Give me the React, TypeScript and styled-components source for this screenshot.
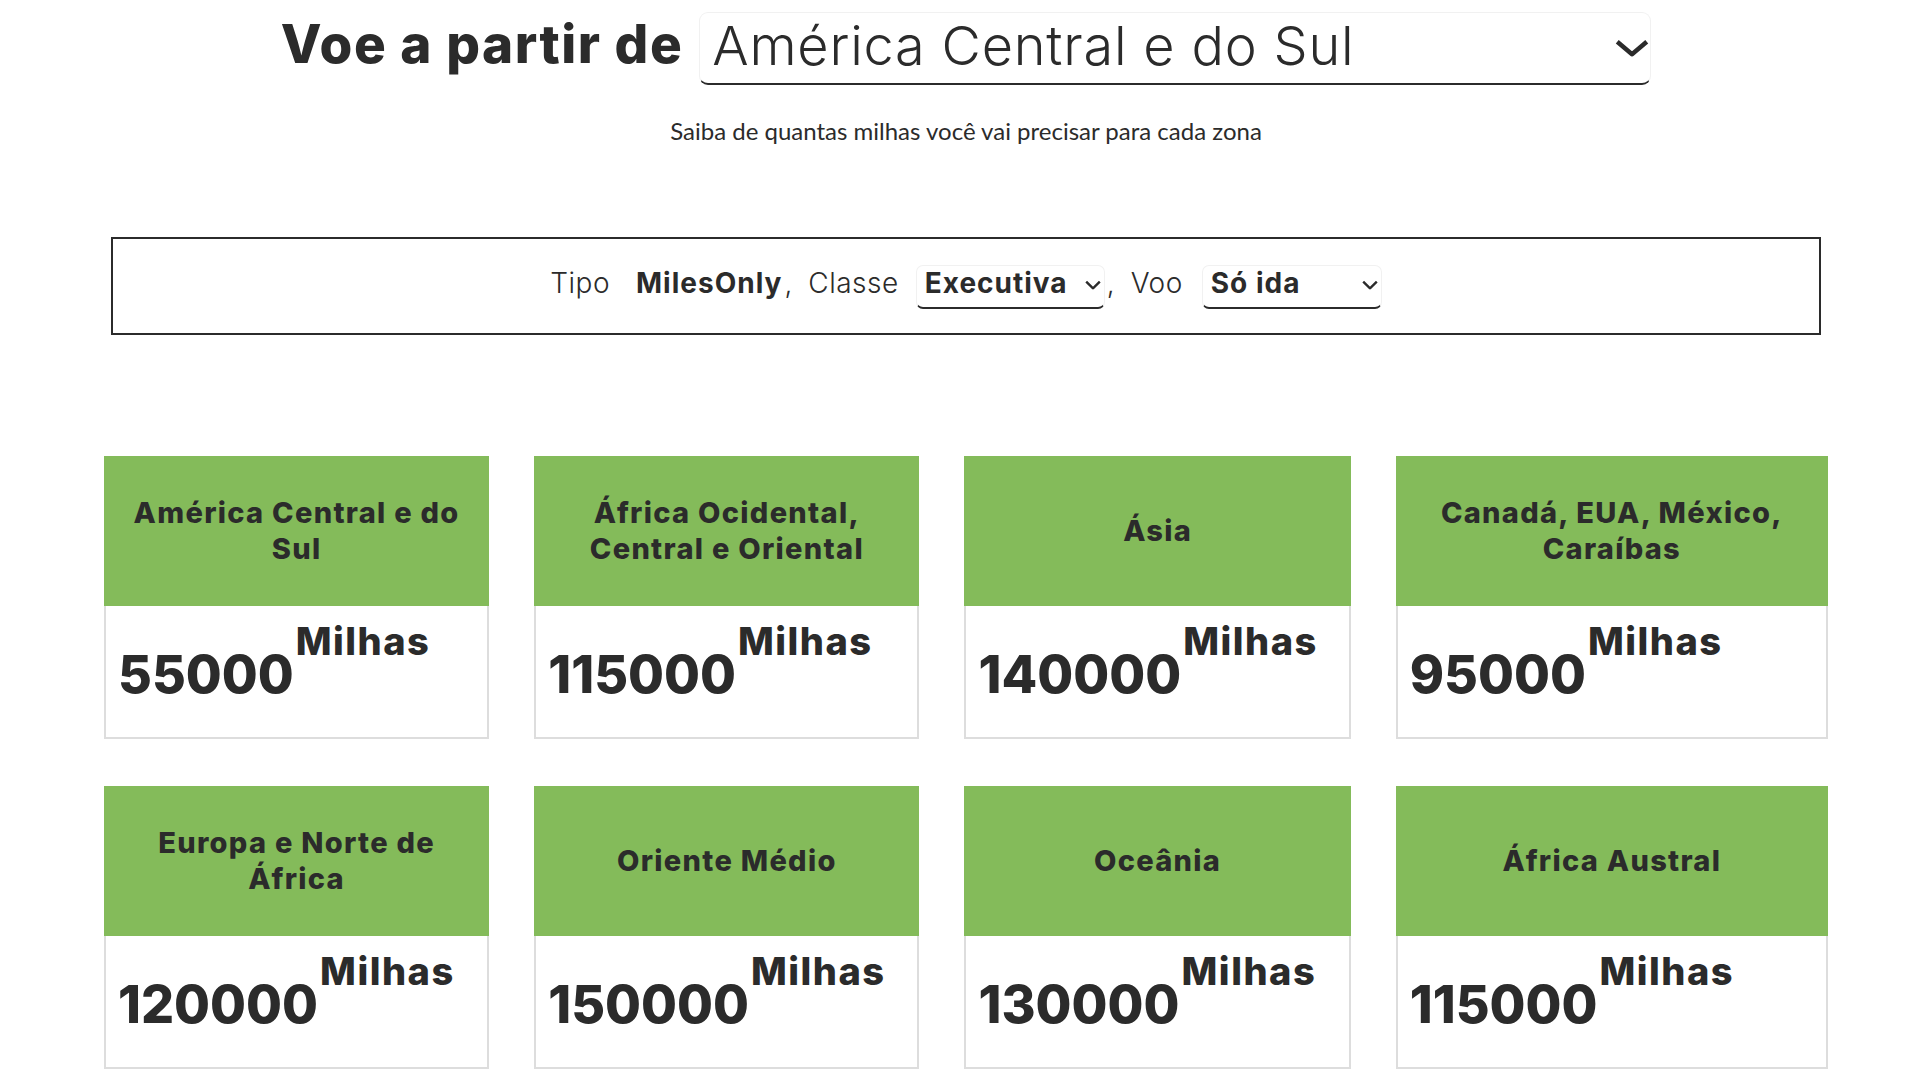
import React, { useState } from "react";
import styled, { createGlobalStyle } from "styled-components";

const GlobalStyle = createGlobalStyle`
  html, body { margin: 0; padding: 0; background: #ffffff; }
  body {
    font-family: Inter, "Open Sans", "DejaVu Sans", sans-serif;
    color: #2b2b2b;
  }
  * { box-sizing: border-box; }
`;

const Page = styled.main`
  padding: 12px 84px 0 104px;
`;

const HeroRow = styled.div`
  display: flex;
  justify-content: center;
  align-items: flex-start;
  gap: 16px;
`;

const HeroTitle = styled.h1`
  margin: 6px 0 0;
  font-size: 53px;
  line-height: 1;
  font-weight: 800;
  letter-spacing: 1.5px;
  color: #2b2b2b;
  white-space: nowrap;
`;

const SelectWrap = styled.div<{ $width: number; $height: number }>`
  position: relative;
  width: ${(p) => p.$width}px;
  height: ${(p) => p.$height}px;
  flex: none;
`;

const HeroSelect = styled.select`
  appearance: none;
  -webkit-appearance: none;
  width: 100%;
  height: 100%;
  margin: 0;
  padding: 0 50px 6px 12px;
  background: #fff;
  border: 1px solid #f1f1f1;
  border-bottom: 2px solid #2b2b2b;
  border-radius: 9px;
  font-family: Inter, "Open Sans", sans-serif;
  font-weight: 300;
  font-size: 54px;
  letter-spacing: 0.8px;
  color: #2b2b2b;
  outline: none;
`;

const FilterSelect = styled.select`
  appearance: none;
  -webkit-appearance: none;
  width: 100%;
  height: 100%;
  margin: 0;
  padding: 0 26px 8px 8px;
  background: #fff;
  border: 1px solid #f1f1f1;
  border-bottom: 2px solid #2b2b2b;
  border-radius: 7px;
  font-family: Inter, "Open Sans", sans-serif;
  font-weight: 700;
  font-size: 28px;
  letter-spacing: 1px;
  color: #2b2b2b;
  outline: none;
`;

const Chevron = styled.svg<{ $right: number; $lift: number }>`
  position: absolute;
  right: ${(p) => p.$right}px;
  top: calc(50% - ${(p) => p.$lift}px);
  transform: translateY(-50%);
  pointer-events: none;
`;

const Subtitle = styled.p`
  margin: 32px 0 0;
  text-align: center;
  font-family: Lato, "Open Sans", sans-serif;
  font-size: 24px;
  line-height: 28px;
  color: #2b2b2b;
`;

const FilterBar = styled.section`
  margin: 92px 7px 0;
  height: 98px;
  border: 2px solid #2b2b2b;
  display: flex;
  justify-content: center;
  align-items: center;
  padding-top: 2px;
`;

const FilterLabel = styled.span<{ $gap: number }>`
  font-size: 28px;
  line-height: 1;
  font-weight: 300;
  letter-spacing: 0.5px;
  margin: 0 ${(p) => p.$gap}px 8px 0;
  white-space: nowrap;
`;

const FilterValue = styled.span`
  font-size: 28px;
  line-height: 1;
  font-weight: 700;
  letter-spacing: 1px;
  margin-bottom: 8px;
  white-space: nowrap;
`;

const Comma = styled.span`
  font-size: 28px;
  line-height: 1;
  font-weight: 300;
  margin: 0 16px 8px 2px;
`;

const Grid = styled.section`
  margin-top: 121px;
  display: grid;
  grid-template-columns: 385fr 385fr 386fr 432fr;
  column-gap: 45px;
  row-gap: 47px;
`;

const Card = styled.article`
  display: flex;
  flex-direction: column;
`;

const CardHeader = styled.header`
  height: 150px;
  background: #84bb5a;
  display: flex;
  align-items: center;
  justify-content: center;
  text-align: center;
  padding: 0 20px;
  font-size: 29px;
  line-height: 36px;
  font-weight: 800;
  letter-spacing: 1.3px;
  color: #2b2b2b;
`;

const CardBody = styled.div`
  height: 133px;
  border: 2px solid #dddddd;
  border-top: 0;
  display: flex;
  align-items: flex-start;
  padding: 0 12px 0 12px;
`;

const Miles = styled.span`
  margin-top: 43px;
  font-size: 52px;
  line-height: 1;
  font-weight: 800;
  letter-spacing: 0;
`;

const Unit = styled.span`
  margin: 16px 0 0 2px;
  font-size: 38px;
  line-height: 1;
  font-weight: 800;
  letter-spacing: 1.5px;
`;

const zones = [
  { name: "América Central e do Sul", miles: 55000 },
  { name: "África Ocidental, Central e Oriental", miles: 115000 },
  { name: "Ásia", miles: 140000 },
  { name: "Canadá, EUA, México, Caraíbas", miles: 95000 },
  { name: "Europa e Norte de África", miles: 120000 },
  { name: "Oriente Médio", miles: 150000 },
  { name: "Oceânia", miles: 130000 },
  { name: "África Austral", miles: 115000 },
];

const ChevronIcon = ({
  w,
  h,
  stroke,
  right,
  lift = 0,
}: {
  w: number;
  h: number;
  stroke: number;
  right: number;
  lift?: number;
}) => (
  <Chevron $right={right} $lift={lift} width={w} height={h} viewBox={`0 0 ${w} ${h}`} fill="none">
    <path
      d={`M${stroke / 2} ${stroke / 2} L${w / 2} ${h - stroke / 2} L${w - stroke / 2} ${stroke / 2}`}
      stroke="#2b2b2b"
      strokeWidth={stroke}
      strokeLinejoin="miter"
    />
  </Chevron>
);

export default function App() {
  const [origin, setOrigin] = useState("America");
  const [cls, setCls] = useState("Executiva");
  const [trip, setTrip] = useState("ida");

  return (
    <>
      <GlobalStyle />
      <Page>
        <HeroRow>
          <HeroTitle>Voe a partir de</HeroTitle>
          <SelectWrap $width={952} $height={73}>
            <HeroSelect value={origin} onChange={(e) => setOrigin(e.target.value)}>
              <option value="America">América Central e do Sul</option>
              <option value="Europa">Europa e Norte de África</option>
              <option value="Asia">Ásia</option>
            </HeroSelect>
            <ChevronIcon w={34} h={17} stroke={4.5} right={2} lift={1} />
          </SelectWrap>
        </HeroRow>
        <Subtitle>Saiba de quantas milhas você vai precisar para cada zona</Subtitle>

        <FilterBar>
          <FilterLabel $gap={26}>Tipo</FilterLabel>
          <FilterValue>MilesOnly</FilterValue>
          <Comma>,</Comma>
          <FilterLabel $gap={17}>Classe</FilterLabel>
          <SelectWrap $width={189} $height={44}>
            <FilterSelect value={cls} onChange={(e) => setCls(e.target.value)}>
              <option value="Executiva">Executiva</option>
              <option value="Economica">Económica</option>
            </FilterSelect>
            <ChevronIcon w={16} h={9} stroke={2.4} right={4} lift={2} />
          </SelectWrap>
          <Comma>,</Comma>
          <FilterLabel $gap={19}>Voo</FilterLabel>
          <SelectWrap $width={180} $height={44}>
            <FilterSelect value={trip} onChange={(e) => setTrip(e.target.value)}>
              <option value="ida">Só ida</option>
              <option value="volta">Ida e volta</option>
            </FilterSelect>
            <ChevronIcon w={16} h={9} stroke={2.4} right={4} lift={2} />
          </SelectWrap>
        </FilterBar>

        <Grid>
          {zones.map((z) => (
            <Card key={z.name}>
              <CardHeader>{z.name}</CardHeader>
              <CardBody>
                <Miles>{z.miles}</Miles>
                <Unit>Milhas</Unit>
              </CardBody>
            </Card>
          ))}
        </Grid>
      </Page>
    </>
  );
}
